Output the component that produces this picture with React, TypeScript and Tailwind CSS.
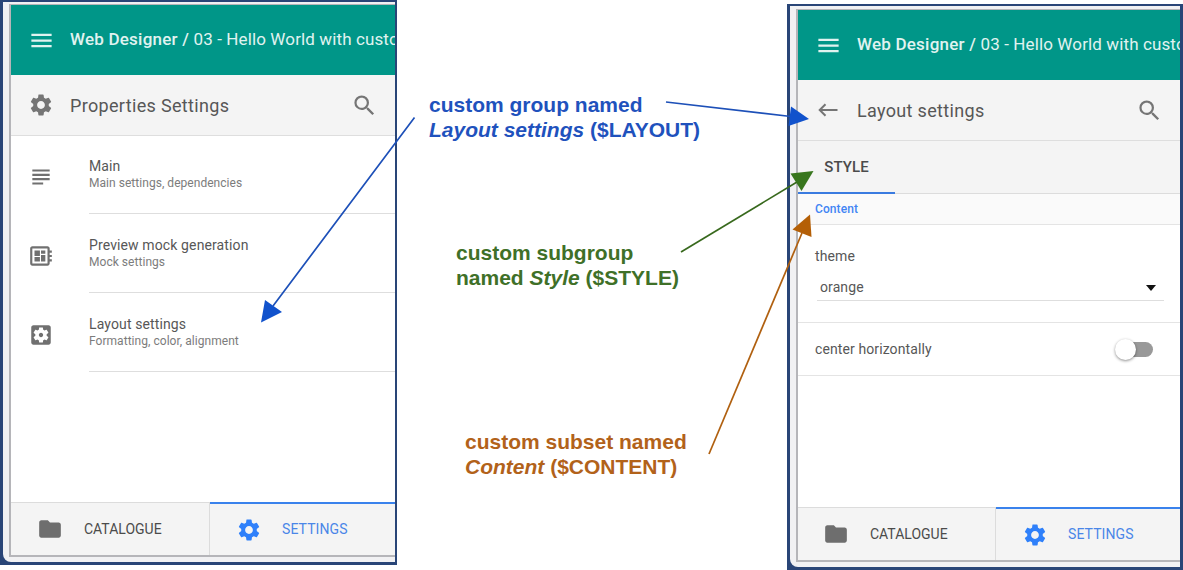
import type { ReactNode } from "react";
import {
  MdDeveloperBoard,
  MdFolder,
  MdMenu,
  MdSearch,
  MdSettings,
  MdSubject,
} from "react-icons/md";

function SettingsBoxIcon() {
  return (
    <svg viewBox="0 0 24 24" className="size-[26px]" fill="currentColor">
      <path d="M12 10c-1.1 0-2 .9-2 2s.9 2 2 2 2-.9 2-2-.9-2-2-2zm7-7H5c-1.11 0-2 .9-2 2v14c0 1.1.89 2 2 2h14c1.11 0 2-.9 2-2V5c0-1.1-.89-2-2-2zm-1.75 9c0 .23-.02.46-.05.68l1.48 1.16c.13.11.17.3.08.45l-1.4 2.42c-.09.15-.27.21-.43.15l-1.74-.7c-.36.28-.76.51-1.18.69l-.26 1.85c-.03.17-.18.3-.35.3h-2.8c-.17 0-.32-.13-.35-.29l-.26-1.85c-.43-.18-.82-.41-1.18-.69l-1.74.7c-.16.06-.34 0-.43-.15l-1.4-2.42c-.09-.15-.05-.34.08-.45l1.48-1.16c-.03-.23-.05-.46-.05-.69 0-.23.02-.46.05-.68l-1.48-1.16c-.13-.11-.17-.3-.08-.45l1.4-2.42c.09-.15.27-.21.43-.15l1.74.7c.36-.28.76-.51 1.18-.69l.26-1.85c.03-.17.18-.3.35-.3h2.8c.17 0 .32.13.35.29l.26 1.85c.43.18.82.41 1.18.69l1.74-.7c.16-.06.34 0 .43.15l1.4 2.42c.09.15.05.34-.08.45l-1.48 1.16c.03.23.05.46.05.69z" />
    </svg>
  );
}

function BackIcon() {
  return (
    <svg viewBox="0 0 26 26" className="size-[26px]" fill="none" stroke="currentColor" strokeWidth="2">
      <path d="M22.500 13H5M10.500 7.200L4.700 13L10.500 18.800" />
    </svg>
  );
}

function AppHeader() {
  return (
    <header className="flex h-[70px] shrink-0 items-center overflow-hidden bg-[#009688] pl-[17px] text-[#e0f3f0]">
      <MdMenu className="size-[27px] shrink-0" />
      <p className="ml-[15px] -mt-px text-[17px] tracking-[0.12px] whitespace-nowrap">
        <span className="font-medium tracking-[0.22px]">Web Designer / </span>03 - Hello World with custom
      </p>
    </header>
  );
}

function Toolbar({ icon, title }: { icon: ReactNode; title: string }) {
  return (
    <div className="flex h-[61px] shrink-0 items-center border-b border-[#dedede] bg-[#f4f4f4] pr-[17px] pl-[17px] text-[#757575]">
      {icon}
      <h2 className="ml-4 flex-1 text-[18px] tracking-[0.33px] text-[#575757]">{title}</h2>
      <MdSearch className="size-[27px]" />
    </div>
  );
}

function BottomTabs({ narrow = false }: { narrow?: boolean }) {
  return (
    <nav className="flex h-[53px] shrink-0 bg-[#f4f4f4] text-[14px]">
      <div
        className={`flex items-center border-t border-r border-[#dcdcdc] text-[#4b4b4b] ${
          narrow ? "w-[198px] pl-[25px]" : "w-[199px] pl-[26px]"
        }`}
      >
        <MdFolder className="size-[26px] text-[#6e6e6e]" />
        <span className="ml-[21px]">CATALOGUE</span>
      </div>
      <div className="flex flex-1 items-center border-t-2 border-[#3a82ec] pl-[26px] text-[#4a86e8]">
        <MdSettings className="size-[26px] text-[#2f80fa]" />
        <span className="ml-5 tracking-[0.1px]">SETTINGS</span>
      </div>
    </nav>
  );
}

const groups = [
  { title: "Main", note: "Main settings, dependencies", icon: <MdSubject className="size-[26px]" /> },
  { title: "Preview mock generation", note: "Mock settings", icon: <MdDeveloperBoard className="size-[26px]" /> },
  { title: "Layout settings", note: "Formatting, color, alignment", icon: <SettingsBoxIcon /> },
];

function GroupList() {
  return (
    <ul className="flex-1">
      {groups.map((g) => (
        <li key={g.title} className="flex h-[79px] pl-[17px] text-[#707070]">
          <span className="mt-7 w-[61px]">{g.icon}</span>
          <div className="h-[78px] flex-1 border-b border-[#dedede] pt-[21px]">
            <p className="text-[14px] leading-[18px] tracking-[0.12px] text-[#575757]">{g.title}</p>
            <p className="text-[12px] leading-4 tracking-[0.04px] text-[#7c7c7c]">{g.note}</p>
          </div>
        </li>
      ))}
    </ul>
  );
}

function LayoutForm() {
  return (
    <div className="flex flex-1 flex-col text-[14px] tracking-[0.1px] text-[#575757]">
      <div className="flex h-[53px] border-b border-[#dcdcdc] bg-[#f4f4f4]">
        <div className="flex h-[53px] w-[97px] items-center justify-center border-b-2 border-[#3a7be0] pt-px text-[15px] font-medium text-[#4b4b4b]">
          STYLE
        </div>
      </div>
      <div className="flex h-[31px] items-center border-b border-[#e4e4e4] bg-[#fafafa] pl-[17px] text-[12px] font-medium text-[#4285f4]">
        Content
      </div>
      <div className="h-[98px] border-b border-[#e4e4e4] pt-[22px] pr-4 pl-[17px]">
        <p className="leading-[18px]">theme</p>
        <div className="ml-[2px] flex h-[36px] items-center justify-between border-b border-[#dedede] pt-[10px] pr-2 pl-[3px]">
          <span>orange</span>
          <svg viewBox="0 0 10 6" className="h-[6px] w-[10px]" fill="#111">
            <path d="M0 0h10L5 6z" />
          </svg>
        </div>
      </div>
      <div className="flex h-[53px] items-center justify-between border-b border-[#e4e4e4] pr-[27px] pl-[17px]">
        <span>center horizontally</span>
        <span className="flex h-[15px] w-[36px] items-center rounded-full bg-[#999]">
          <span className="-ml-[2px] size-[21px] shrink-0 rounded-full bg-white shadow-[0_1px_3px_rgba(0,0,0,0.45)]" />
        </span>
      </div>
    </div>
  );
}

export default function App() {
  return (
    <main className="relative flex h-[570px] w-[1183px] overflow-hidden bg-white font-['Roboto',sans-serif]">
      <section className="h-[565px] w-[397px] border-t-2 border-r-2 border-b-[3px] border-l-[3px] border-[#294577] bg-[#294577]">
        <div className="flex h-full rounded-bl-lg bg-[#f1f1f3] pt-[2px] pb-[5px] pl-[6px]">
          <div className="flex min-w-0 flex-1 flex-col border-t border-b-2 border-l-2 border-[#b5b5b9] bg-white">
            <AppHeader />
            <Toolbar icon={<MdSettings className="size-[26px]" />} title="Properties Settings" />
            <GroupList />
            <BottomTabs />
          </div>
        </div>
      </section>

      <section className="mt-[4px] ml-[390px] h-[566px] w-[396px] border-t-2 border-r-[3px] border-b-[3px] border-l-[3px] border-[#294577] bg-[#294577]">
        <div className="flex h-full rounded-bl-lg bg-[#f1f1f3] pt-[3px] pb-[5px] pl-[6px]">
          <div className="flex min-w-0 flex-1 flex-col border-t border-b-2 border-l-2 border-[#b5b5b9] bg-white">
            <AppHeader />
            <Toolbar icon={<BackIcon />} title="Layout settings" />
            <LayoutForm />
            <BottomTabs narrow />
          </div>
        </div>
      </section>

      <p className="absolute top-[92px] left-[429px] font-['Liberation_Sans',sans-serif] text-[21px] leading-[25px] font-bold whitespace-nowrap text-[#1f52bd]">
        custom group named
        <br />
        <em>Layout settings</em> ($LAYOUT)
      </p>
      <p className="absolute top-[240px] left-[456px] font-['Liberation_Sans',sans-serif] text-[21px] leading-[25px] font-bold whitespace-nowrap text-[#3f7028]">
        custom subgroup
        <br />
        named <em>Style</em> ($STYLE)
      </p>
      <p className="absolute top-[429px] left-[465px] font-['Liberation_Sans',sans-serif] text-[21px] leading-[25px] font-bold whitespace-nowrap text-[#b2621a]">
        custom subset named
        <br />
        <em>Content</em> ($CONTENT)
      </p>

      <svg className="absolute inset-0" width="1183" height="570" fill="none" strokeWidth="1.7">
        <g stroke="#1d50b8">
          <path d="M414.5 117.500L273 306M666 102L791 116.500" />
          <path d="M261 322.500L265 300L282 312ZM809 119L791 106.500L788.500 126Z" fill="#1152cc" stroke="none" />
        </g>
        <g stroke="#38691d">
          <path d="M681 252L797 182" />
          <path d="M813.500 171L790.500 173.500L801.500 191Z" fill="#38761d" stroke="none" />
        </g>
        <g stroke="#b06010">
          <path d="M709 454L802 233" />
          <path d="M810 214.500L792.500 229.500L811.500 237Z" fill="#b45f06" stroke="none" />
        </g>
      </svg>
    </main>
  );
}
